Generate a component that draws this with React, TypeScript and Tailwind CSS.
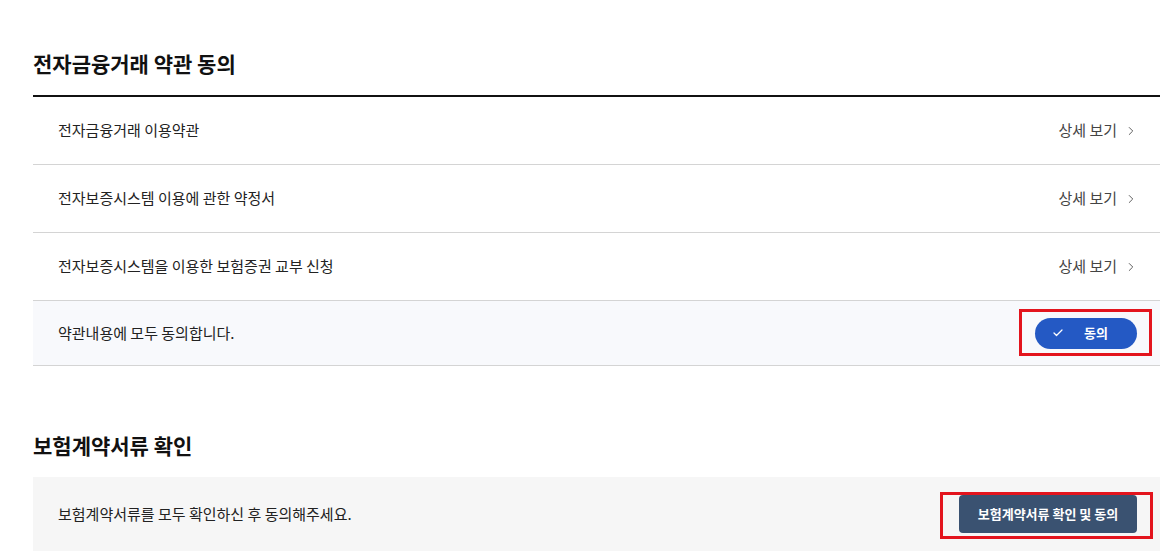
import { Check, ChevronRight } from 'lucide-react';

const terms = [
  '전자금융거래 이용약관',
  '전자보증시스템 이용에 관한 약정서',
  '전자보증시스템을 이용한 보험증권 교부 신청',
];

const Highlight = ({ children, className }: { children: React.ReactNode; className: string }) => (
  <div className="relative">
    {children}
    <div className={`pointer-events-none absolute border-[3px] border-[#e3141d] ${className}`} />
  </div>
);

const App = () => {
  return (
    <div
      className="min-h-[552px] w-[1172px] bg-white pl-[33px] pr-[12px] text-[#222]"
      style={{ fontFamily: '"Noto Sans CJK KR", "Noto Sans", sans-serif' }}
    >
      <h2 className="pt-[48px] text-[21px] font-bold leading-[30px] text-[#111]">
        전자금융거래 약관 동의
      </h2>
      <div className="mt-[17px] border-t-2 border-[#111]">
        {terms.map((t) => (
          <div
            key={t}
            className="flex h-[68px] items-center justify-between border-b border-[#d4d4d4] pl-[25px] pr-[22px]"
          >
            <span className="text-[15px]">{t}</span>
            <button className="flex items-center gap-[7px] text-[15px] text-[#444]">
              상세 보기
              <ChevronRight className="h-[14px] w-[14px] text-[#555]" strokeWidth={1.6} />
            </button>
          </div>
        ))}
        <div className="flex h-[65px] items-center justify-between border-b border-[#d4d4d4] bg-[#f8f9fc] pl-[25px] pr-[23px]">
          <span className="text-[15px]">약관내용에 모두 동의합니다.</span>
          <Highlight className="-bottom-[7px] -left-[16px] -right-[15px] -top-[9px]">
            <button className="flex h-[31px] w-[102px] items-center justify-center gap-[20px] rounded-full bg-[#2459c4] pr-[12px] text-[13px] font-bold text-white">
              <Check className="h-[12px] w-[12px]" strokeWidth={2.5} />
              동의
            </button>
          </Highlight>
        </div>
      </div>

      <h2 className="mt-[64px] text-[21px] font-bold leading-[30px] text-[#111]">
        보험계약서류 확인
      </h2>
      <div className="mt-[17px] flex h-[74px] items-center justify-between bg-[#f6f6f6] pl-[25px] pr-[23px]">
        <span className="text-[15px]">보험계약서류를 모두 확인하신 후 동의해주세요.</span>
        <Highlight className="-bottom-[6px] -left-[19px] -right-[16px] -top-[3px]">
          <button className="h-[38px] w-[178px] rounded-[4px] bg-[#3a5271] text-[13px] font-bold text-white">
            보험계약서류 확인 및 동의
          </button>
        </Highlight>
      </div>
    </div>
  );
};

export default App;
